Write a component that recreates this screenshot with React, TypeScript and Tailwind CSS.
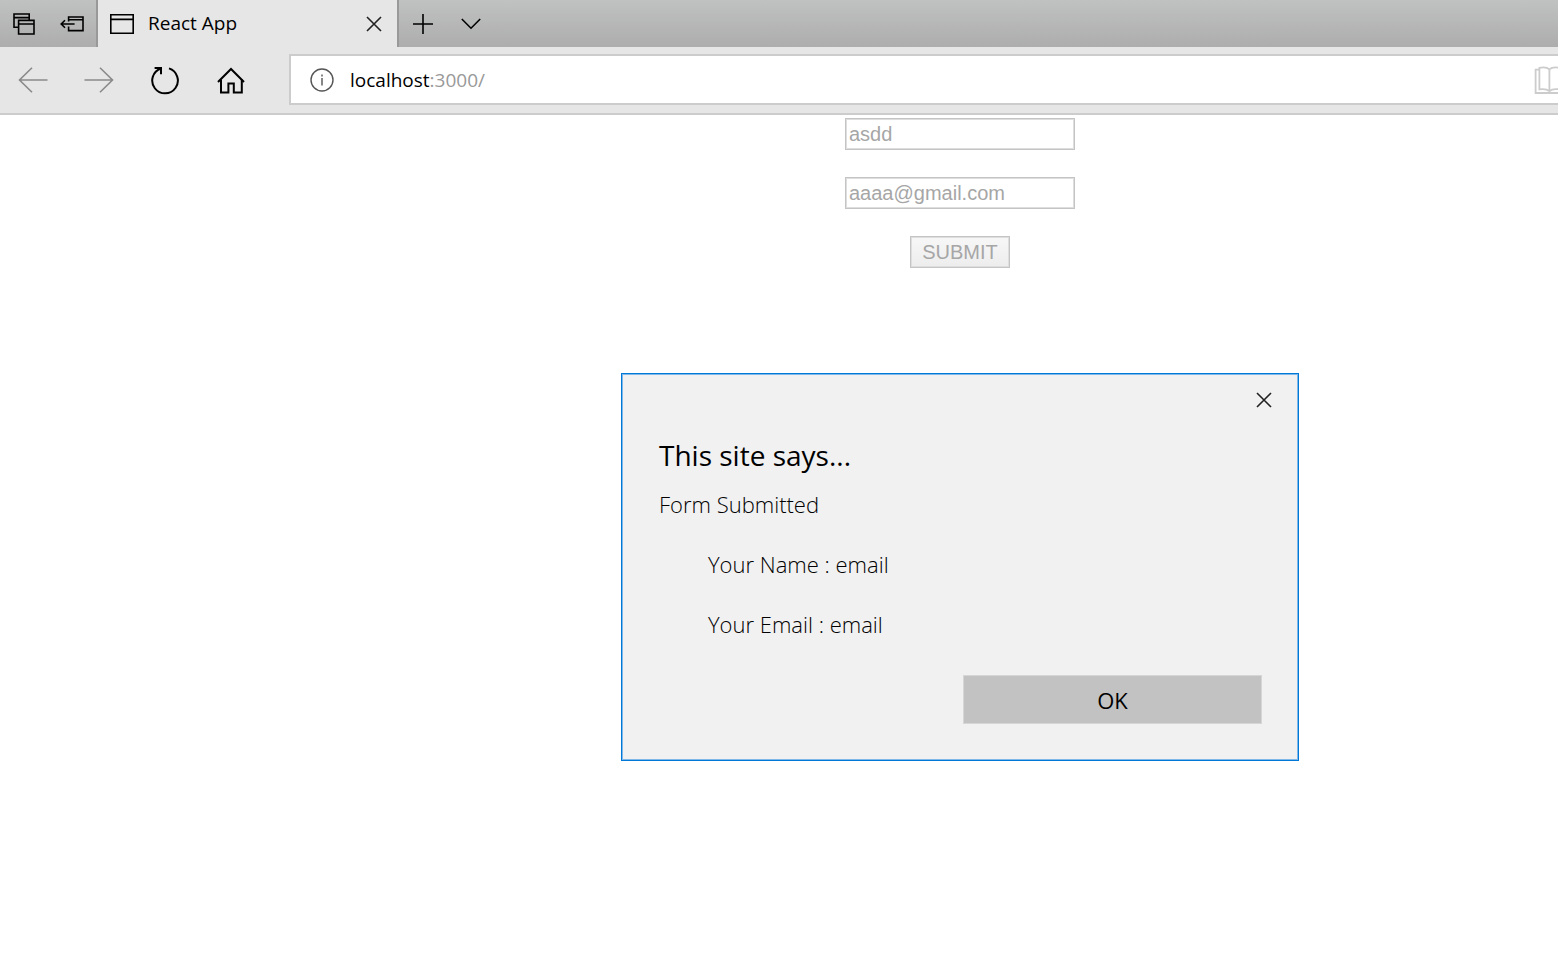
import React, { useState } from "react";

type IconProps = { className?: string; children: React.ReactNode; w: number; h: number; stroke?: number };

function Icon({ className = "", children, w, h, stroke = 1.6 }: IconProps) {
  return (
    <svg
      className={`block shrink-0 ${className}`}
      width={w}
      height={h}
      viewBox={`0 0 ${w} ${h}`}
      fill="none"
      stroke="currentColor"
      strokeWidth={stroke}
      aria-hidden="true"
    >
      {children}
    </svg>
  );
}

function CloseIcon() {
  return (
    <Icon w={16} h={16}>
      <path d="M1 1 15 15M15 1 1 15" />
    </Icon>
  );
}

function TabStrip() {
  return (
    <div className="flex h-[47px] bg-linear-to-b from-[#c0c1c1] to-[#adadad]">
      <div className="flex shrink-0 border-r-2 border-[#999999]">
        <button type="button" aria-label="Tabs you've set aside" className="flex w-12 items-center justify-center">
          <Icon w={22} h={22}>
            <path d="M5.6 14.2H1V1H16.2V7.4M1 4.6H16.2" />
            <path d="M5.6 7.4H21V21H5.6ZM5.6 11H21" />
          </Icon>
        </button>
        <button type="button" aria-label="Set these tabs aside" className="flex w-12 items-center justify-center">
          <Icon w={24} h={16}>
            <path d="M8.6 5.4V1H23V14.6H8.6V10.4M8.6 3.8H23" />
            <path d="M14.6 8H1.4M5 4.2 1.2 8 5 11.8" />
          </Icon>
        </button>
      </div>
      <div className="flex w-[301px] shrink-0 items-center border-r-2 border-[#999999] bg-[#e6e6e6] pl-3">
        <Icon w={24} h={20}>
          <path d="M.8 .8H23.2V19.2H.8ZM.8 5.4H23.2" />
        </Icon>
        <span className="ml-[14px] flex-1 pb-0.5 text-[19px] leading-6">React App</span>
        <button type="button" aria-label="Close tab" className="flex h-full w-[46px] items-center justify-center text-[#222222]">
          <CloseIcon />
        </button>
      </div>
      <button type="button" aria-label="New tab" className="flex w-12 items-center justify-center">
        <Icon w={20} h={20}>
          <path d="M10 0V20M0 10H20" />
        </Icon>
      </button>
      <button type="button" aria-label="Show tab previews" className="flex w-12 items-center justify-center">
        <Icon w={20} h={12}>
          <path d="M.8 1 10 10.2 19.2 1" />
        </Icon>
      </button>
    </div>
  );
}

function Toolbar() {
  return (
    <div className="flex h-[68px] items-center overflow-hidden border-b-2 border-[#cccccc] bg-[#e6e6e6]">
      <button type="button" aria-label="Back" className="flex h-full w-[66px] shrink-0 items-center justify-center text-[#8a8a8a]">
        <Icon w={30} h={26}>
          <path d="M29.5 13H1.5M14 .8 1.5 13 14 25.2" />
        </Icon>
      </button>
      <button type="button" aria-label="Forward" className="flex h-full w-[66px] shrink-0 items-center justify-center text-[#8a8a8a]">
        <Icon w={30} h={26}>
          <path d="M.5 13H28.5M16 .8 28.5 13 16 25.2" />
        </Icon>
      </button>
      <button type="button" aria-label="Refresh" className="flex h-full w-[66px] shrink-0 items-center justify-center">
        <Icon w={28} h={30} stroke={2}>
          <path d="M18 3.4A12.8 12.8 0 1 1 9.8 3.5" />
          <path d="M3.6 3H10V9.2" />
        </Icon>
      </button>
      <button type="button" aria-label="Home" className="flex h-full w-[66px] shrink-0 items-center justify-center">
        <Icon w={28} h={28} stroke={2}>
          <path d="M1 16 14 3 27 16" />
          <path d="M4 13.4V26.6H11.4V17.6H16.8V26.6H24.8V13.4" />
        </Icon>
      </button>
      <div className="mb-0.5 ml-[25px] flex h-[51px] min-w-0 flex-1 items-center border-2 border-r-0 border-[#cccccc] bg-white pt-0.5 pl-[19px]">
        <Icon w={24} h={24} stroke={1.4} className="text-[#555555]">
          <circle cx="12" cy="12" r="11" />
          <path d="M12 10V17.4M12 6.6V8.4" />
        </Icon>
        <a href="#" className="ml-4 flex-1 text-[19px] leading-6 text-black">
          localhost<span className="text-[#999999]">:3000/</span>
        </a>
        <button type="button" aria-label="Reading view" className="-mr-2 shrink-0 text-[#cccccc]">
          <Icon w={32} h={28} stroke={1.8}>
            <path d="M5.4 3.6H1.6V27H29V3.6H25.4" />
            <path d="M15.4 3.4C13 1 9 1.2 5.4 1.8V23.4C9 22.8 13 23 15.4 25.2C17.8 23 21.8 22.8 25.4 23.4V1.8C21.8 1.2 17.8 1 15.4 3.4V26" />
          </Icon>
        </button>
      </div>
    </div>
  );
}

const message = ["Form Submitted", "Your Name : email", "Your Email : email"];

function AlertDialog({ onClose }: { onClose: () => void }) {
  return (
    <section
      role="alertdialog"
      aria-labelledby="alert-title"
      className="relative flex w-[678px] flex-col border border-[#0078d7] bg-[#f1f1f1] px-[37px] pt-[63px] pb-9 inset-ring inset-ring-[#7fb8e8]"
    >
      <button
        type="button"
        aria-label="Close"
        onClick={onClose}
        className="absolute top-0.5 right-[10px] flex h-12 w-12 items-center justify-center text-[#222222]"
      >
        <CloseIcon />
      </button>
      <h1 id="alert-title" className="text-[28px] leading-9">
        This site says...
      </h1>
      <div className="mt-4 flex flex-col gap-[30px] text-[22px] leading-[30px] font-light">
        <p>{message[0]}</p>
        <p className="pl-[49px]">{message[1]}</p>
        <p className="pl-[49px]">{message[2]}</p>
      </div>
      <button
        type="button"
        onClick={onClose}
        className="-mr-px mt-9 h-[49px] w-[299px] self-end border border-[#d6d6d6] bg-[#c2c2c2] pt-0.5 text-[22px]"
      >
        OK
      </button>
    </section>
  );
}

const field =
  "h-8 w-[230px] border border-[#c4c4c4] bg-white px-[3px] font-['Liberation_Sans',sans-serif] text-[20px] text-[#a6a6a6] outline-none inset-ring inset-ring-[#dedede]";

export default function App() {
  const [name, setName] = useState("asdd");
  const [email, setEmail] = useState("aaaa@gmail.com");
  const [open, setOpen] = useState(true);

  return (
    <div className="flex min-h-screen flex-col bg-white font-['Open_Sans',sans-serif] text-black">
      <header>
        <TabStrip />
        <Toolbar />
      </header>
      <main className="relative flex-1 pl-[362px]">
        <form
          className="flex flex-col items-center gap-[27px] pt-[3px]"
          onSubmit={(e) => {
            e.preventDefault();
            setOpen(true);
          }}
        >
          <input aria-label="Name" value={name} onChange={(e) => setName(e.target.value)} className={field} />
          <input aria-label="Email" value={email} onChange={(e) => setEmail(e.target.value)} className={field} />
          <button
            type="submit"
            className="flex h-8 w-[100px] items-center justify-center border border-[#c4c4c4] bg-linear-to-b from-[#f7f7f7] to-[#ededed] font-['Liberation_Sans',sans-serif] text-[20px] text-[#a6a6a6] inset-ring inset-ring-[#dedede]"
          >
            SUBMIT
          </button>
        </form>
        {open && (
          <div className="absolute inset-x-0 top-[258px] flex justify-center pl-[362px]">
            <AlertDialog onClose={() => setOpen(false)} />
          </div>
        )}
      </main>
    </div>
  );
}
